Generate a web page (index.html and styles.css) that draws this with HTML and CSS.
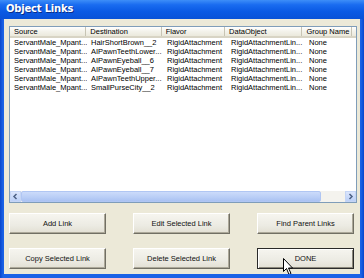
FILE: index.html
```html
<!DOCTYPE html>
<html>
<head>
<meta charset="utf-8">
<link rel="stylesheet" href="styles.css">
</head>
<body>
<div class="window">
  <div class="titlebar">Object Links</div>
  <div class="client">
    <div class="listview">
      <div class="header">
        <div class="hcell c1">Source</div>
        <div class="hcell c2">Destination</div>
        <div class="hcell c3">Flavor</div>
        <div class="hcell c4">DataObject</div>
        <div class="hcell c5">Group Name</div>
        <div class="hcell c6"></div>
      </div>
      <div class="rows">
        <div class="row"><span class="c1">ServantMale_Mpant...</span><span class="c2">HairShortBrown__2</span><span class="c3">RigidAttachment</span><span class="c4">RigidAttachmentLin...</span><span class="c5">None</span></div>
        <div class="row"><span class="c1">ServantMale_Mpant...</span><span class="c2">AIPawnTeethLower...</span><span class="c3">RigidAttachment</span><span class="c4">RigidAttachmentLin...</span><span class="c5">None</span></div>
        <div class="row"><span class="c1">ServantMale_Mpant...</span><span class="c2">AIPawnEyeball__6</span><span class="c3">RigidAttachment</span><span class="c4">RigidAttachmentLin...</span><span class="c5">None</span></div>
        <div class="row"><span class="c1">ServantMale_Mpant...</span><span class="c2">AIPawnEyeball__7</span><span class="c3">RigidAttachment</span><span class="c4">RigidAttachmentLin...</span><span class="c5">None</span></div>
        <div class="row"><span class="c1">ServantMale_Mpant...</span><span class="c2">AIPawnTeethUpper...</span><span class="c3">RigidAttachment</span><span class="c4">RigidAttachmentLin...</span><span class="c5">None</span></div>
        <div class="row"><span class="c1">ServantMale_Mpant...</span><span class="c2">SmallPurseCity__2</span><span class="c3">RigidAttachment</span><span class="c4">RigidAttachmentLin...</span><span class="c5">None</span></div>
      </div>
      <div class="hscroll">
        <div class="sbtn"><svg width="9" height="9" viewBox="0 0 9 9"><path d="M5.5 2 L3 4.5 L5.5 7" fill="none" stroke="#4d6185" stroke-width="1.5"/></svg></div>
        <div class="thumb"></div>
        <div class="track"></div>
        <div class="sbtn"><svg width="9" height="9" viewBox="0 0 9 9"><path d="M3.5 2 L6 4.5 L3.5 7" fill="none" stroke="#4d6185" stroke-width="1.5"/></svg></div>
      </div>
    </div>
    <div class="buttons">
      <div class="btn">Add Link</div>
      <div class="btn">Edit Selected Link</div>
      <div class="btn">Find Parent Links</div>
      <div class="btn">Copy Selected Link</div>
      <div class="btn">Delete Selected Link</div>
      <div class="btn default">DONE</div>
    </div>
    <svg class="cursor" width="12" height="18" viewBox="0 0 12 18"><path d="M0.5 0.5 L0.5 13.5 L3.5 10.5 L6 16.5 L8 15.5 L5.5 10 L9.5 10 Z" fill="#fff" stroke="#000" stroke-width="1"/></svg>
  </div>
</div>
</body>
</html>
```
FILE: styles.css
```css
html, body {
  margin: 0;
  padding: 0;
  width: 364px;
  height: 278px;
  overflow: hidden;
  background: #0a4fd6;
}
.window {
  width: 364px;
  height: 278px;
  display: flex;
  flex-direction: column;
  background: linear-gradient(90deg, #0846cc 0px, #1a62e6 3px, #1a62e6 361px, #0846cc 364px);
  font-family: "Liberation Sans", Arial, sans-serif;
}
.titlebar {
  height: 19px;
  box-sizing: border-box;
  padding: 3px 0 0 6px;
  color: #fff;
  font-family: "DejaVu Sans", sans-serif;
  font-weight: bold;
  font-size: 10px;
  letter-spacing: -0.2px;
  background: linear-gradient(180deg, #3d8ef8 0%, #1a6cf0 25%, #0a5ae4 60%, #0852d8 100%);
  text-shadow: 1px 1px 0 #0a2f8a;
}
.client {
  position: relative;
  flex: 1;
  margin: 0 4px 4px 4px;
  background: #ece9d8;
  padding: 7px 0 0 5px;
  display: flex;
  flex-direction: column;
  overflow: hidden;
}
.listview {
  width: 348px;
  height: 177px;
  box-sizing: border-box;
  border: 1px solid #7f9db9;
  background: #fff;
  display: flex;
  flex-direction: column;
  font-size: 7.5px;
  color: #000;
}
.header {
  display: flex;
  height: 11px;
  box-sizing: border-box;
  background: linear-gradient(180deg, #fff 0%, #f3f2ea 50%, #ebe9dc 100%);
  border-bottom: 2px solid #d8d4c4;
}
.hcell {
  box-sizing: border-box;
  padding: 1px 0 0 4px;
  border-right: 1px solid #c7c4b4;
  white-space: nowrap;
  overflow: hidden;
  line-height: 8px;
}
.c1 { width: 77px; }
.c2 { width: 76px; }
.c3 { width: 64px; }
.c4 { width: 78px; }
.c5 { width: 50px; }
.c6 { flex: 1; border-right: none; }
.rows {
  flex: 1;
}
.row {
  display: flex;
  height: 9px;
  line-height: 9px;
  white-space: nowrap;
}
.row span {
  box-sizing: border-box;
  padding-left: 4px;
  overflow: hidden;
}
.hscroll {
  height: 11px;
  display: flex;
  background: #f4f3ee;
}
.sbtn {
  width: 11px;
  height: 11px;
  box-sizing: border-box;
  background: linear-gradient(180deg, #dbe6fc, #bcd0f7);
  border: 1px solid #c5d5f5;
  display: flex;
  align-items: center;
  justify-content: center;
}
.thumb {
  width: 300px;
  box-sizing: border-box;
  background: linear-gradient(180deg, #cbdbfa 0%, #b8cdf6 60%, #aac2f2 100%);
  border: 1px solid #b0c6f3;
  border-radius: 2px;
}
.track {
  flex: 1;
}
.buttons {
  margin-top: 10px;
  display: grid;
  grid-template-columns: 97px 97px 97px;
  column-gap: 27px;
  row-gap: 14px;
}
.btn {
  height: 21px;
  box-sizing: border-box;
  background: linear-gradient(180deg, #f6f5ef 0%, #ecebe3 60%, #e2dfd3 100%);
  border: 1px solid #fff;
  border-right-color: #716f64;
  border-bottom-color: #716f64;
  box-shadow: inset -1px -1px 0 #aca899;
  font-size: 7.5px;
  display: flex;
  align-items: center;
  justify-content: center;
  color: #111;
}
.btn.default {
  border: 1px solid #2a2a2a;
  box-shadow: inset 1px 1px 0 #fff, inset -1px -1px 0 #8a877a;
}
.cursor {
  position: absolute;
  left: 279px;
  top: 239px;
}
```
